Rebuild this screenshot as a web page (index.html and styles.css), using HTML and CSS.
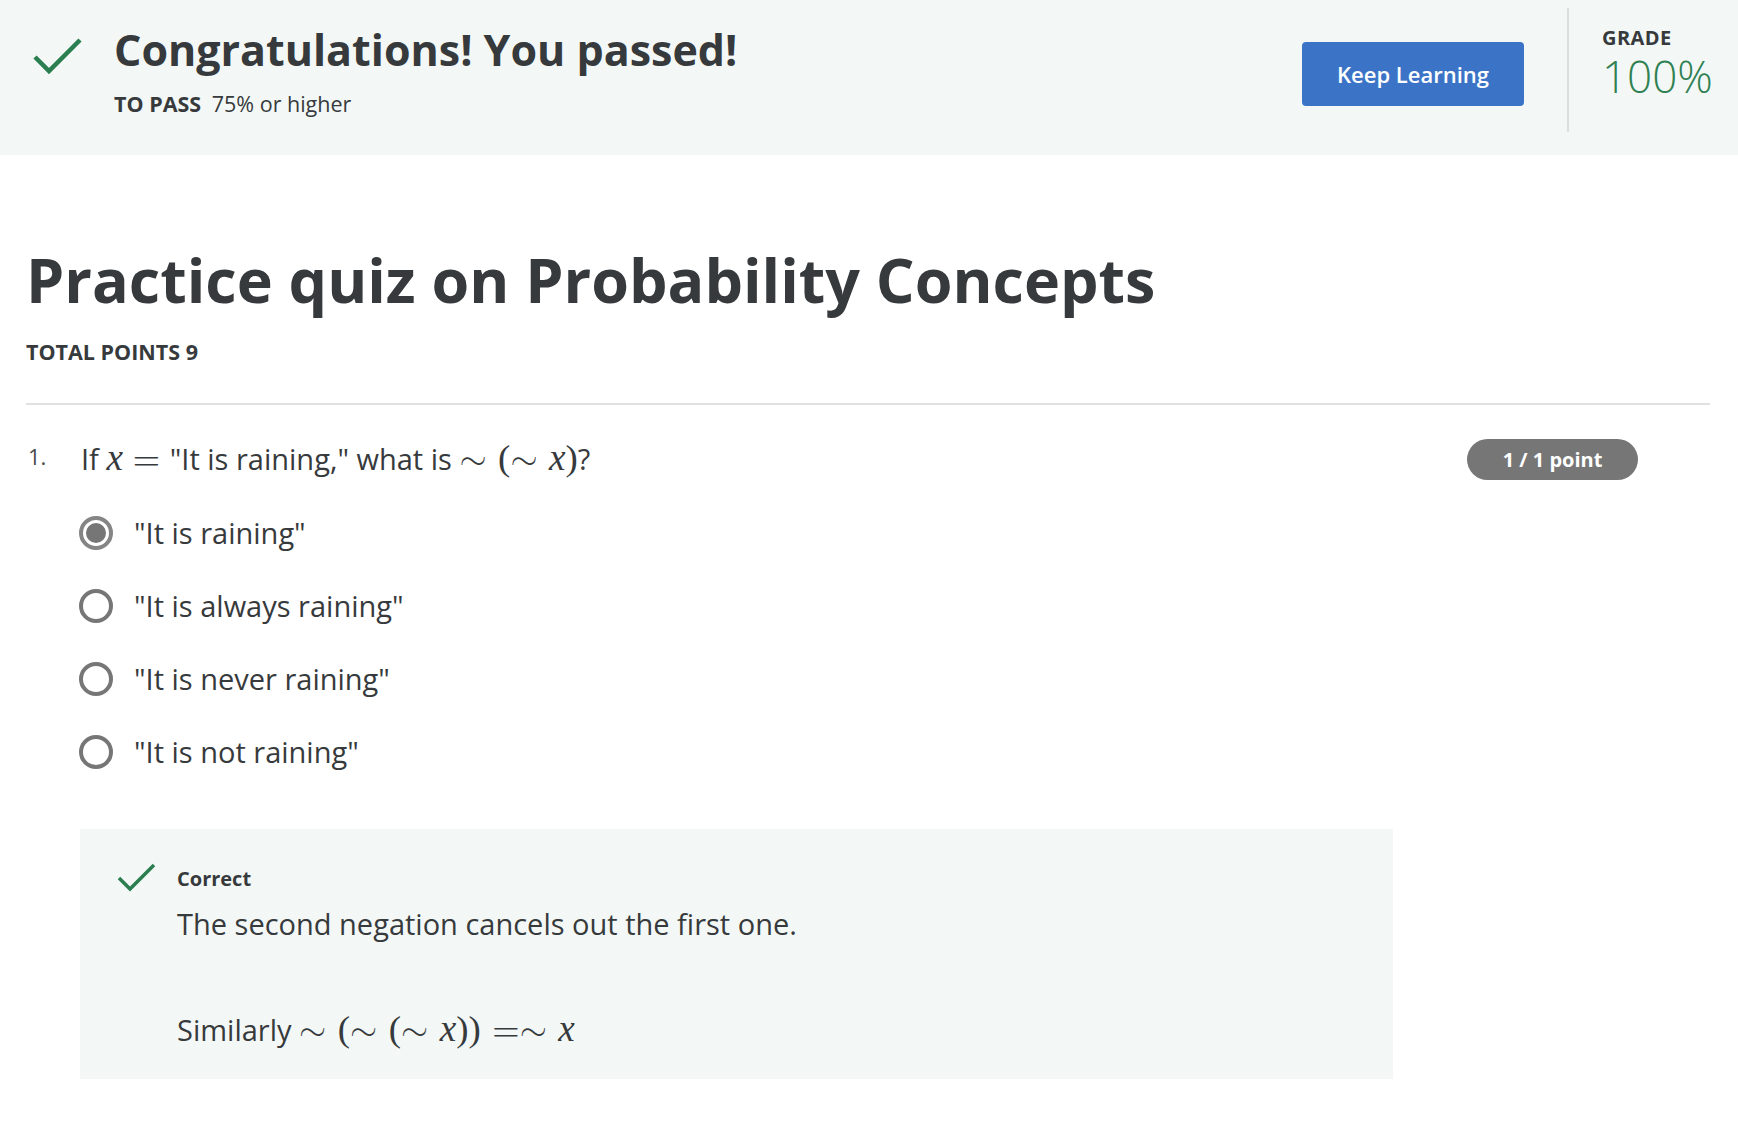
FILE: index.html
```html
<!DOCTYPE html>
<html lang="en">
<head>
<meta charset="utf-8">
<title>Practice quiz on Probability Concepts</title>
<link rel="stylesheet" href="styles.css">
</head>
<body>
<header class="banner">
  <svg class="banner-check" width="50" height="40" viewBox="0 0 50 40" aria-hidden="true">
    <polyline points="2,20 16,34 47,3" fill="none" stroke="#2a7e50" stroke-width="4.5"/>
  </svg>
  <div class="banner-text">
    <h1 class="banner-title">Congratulations! You passed!</h1>
    <div class="banner-sub"><span class="label">TO PASS</span> 75% or higher</div>
  </div>
  <button class="btn-primary" type="button">Keep Learning</button>
  <div class="banner-divider"></div>
  <div class="grade">
    <div class="grade-label">GRADE</div>
    <div class="grade-value">100%</div>
  </div>
</header>

<main class="page">
  <h2 class="quiz-title">Practice quiz on Probability Concepts</h2>
  <div class="total">TOTAL POINTS 9</div>
  <hr class="rule">

  <section class="question">
    <div class="q-head">
      <span class="q-num">1.</span>
      <p class="q-text">If <span class="math"><i class="var">x</i><span class="rel both">=</span></span>"It is raining," what is <span class="math"><span class="rel">∼</span><span class="par">(</span><span class="rel">∼</span><i class="var">x</i><span class="par">)</span></span>?</p>
      <span class="badge">1 / 1 point</span>
    </div>

    <ul class="options">
      <li class="option"><span class="radio checked"></span><span class="opt-text">"It is raining"</span></li>
      <li class="option"><span class="radio"></span><span class="opt-text">"It is always raining"</span></li>
      <li class="option"><span class="radio"></span><span class="opt-text">"It is never raining"</span></li>
      <li class="option"><span class="radio"></span><span class="opt-text">"It is not raining"</span></li>
    </ul>

    <div class="feedback">
      <svg class="fb-check" width="40" height="32" viewBox="0 0 40 32" aria-hidden="true">
        <polyline points="2,16 13,27 37,3" fill="none" stroke="#2a7e50" stroke-width="3.5"/>
      </svg>
      <div class="fb-body">
        <div class="fb-title">Correct</div>
        <p class="fb-p1">The second negation cancels out the first one.</p>
        <p class="fb-p2">Similarly <span class="math"><span class="rel">∼</span><span class="par">(</span><span class="rel">∼</span><span class="par">(</span><span class="rel">∼</span><i class="var">x</i><span class="par">))</span><span class="rel left">=</span><span class="rel">∼</span><i class="var">x</i></span></p>
      </div>
    </div>
  </section>
</main>
</body>
</html>
```
FILE: styles.css
```css
body {
  margin: 0;
  font-family: "Open Sans", "Noto Sans", sans-serif;
  color: #373a3c;
  background: #ffffff;
}

/* Banner */
.banner {
  display: flex;
  align-items: flex-start;
  height: 155px;
  box-sizing: border-box;
  padding-left: 33px;
  background: #f3f8f6;
}
.banner-check {
  flex-shrink: 0;
  margin-top: 37px;
}
.banner-text {
  flex: 1;
  margin-left: 31px;
  padding-top: 28px;
}
.banner-title {
  margin: 0;
  font-size: 43px;
  line-height: 43px;
  font-weight: 700;
}
.banner-sub {
  margin-top: 22px;
  font-size: 21.5px;
  line-height: 21.5px;
}
.label {
  font-weight: 700;
  margin-right: 5px;
}
.btn-primary {
  flex-shrink: 0;
  margin-top: 42px;
  width: 222px;
  height: 64px;
  padding: 0;
  border: 0;
  border-radius: 4px;
  background: #3b74c7;
  color: #ffffff;
  font-family: "Open Sans", sans-serif;
  font-size: 22px;
  font-weight: 600;
}
.banner-divider {
  flex-shrink: 0;
  width: 2px;
  height: 124px;
  margin: 8px 0 0 43px;
  background: #dcdedd;
}
.grade {
  flex-shrink: 0;
  width: 136px;
  margin-left: 33px;
  padding-top: 28px;
}
.grade-label {
  font-size: 20px;
  line-height: 20px;
  font-weight: 700;
  letter-spacing: 0.4px;
}
.grade-value {
  margin-top: 2px;
  font-size: 44px;
  line-height: 1.2;
  font-weight: 300;
  color: #2f8052;
}

/* Page */
.page {
  padding: 0 28px 0 26px;
}
.quiz-title {
  margin: 94px 0 0;
  font-size: 61px;
  line-height: 61px;
  font-weight: 700;
}
.total {
  margin-top: 31px;
  font-size: 21.5px;
  line-height: 21.5px;
  font-weight: 700;
}
.rule {
  margin: 40px 0 0;
  height: 2px;
  border: 0;
  background: #e1e1e1;
}

/* Question */
.q-head {
  display: flex;
  align-items: flex-start;
}
.q-num {
  flex-shrink: 0;
  width: 53px;
  padding-left: 2px;
  margin-top: 40px;
  font-size: 22px;
  line-height: 22px;
  color: #4a4a4a;
}
.q-text {
  flex: 1;
  margin: 37px 0 0;
  font-size: 29px;
  line-height: 1.2;
}

/* Math (KaTeX-like) */
.math {
  font-family: "Latin Modern Math", "DejaVu Serif", "Liberation Serif", serif;
  font-size: 1.21em;
  line-height: 0;
  white-space: nowrap;
}
.var {
  font-family: "Liberation Serif", "DejaVu Serif", serif;
  font-style: italic;
  font-size: 1.06em;
}
.par {
  font-family: "Liberation Serif", "DejaVu Serif", serif;
  font-size: 1.05em;
}
.rel {
  margin-right: 0.33em;
}
.rel.both {
  margin-left: 0.278em;
  margin-right: 0.28em;
}
.rel.left {
  margin-left: 0.33em;
  margin-right: 0;
}

.badge {
  flex-shrink: 0;
  display: flex;
  align-items: center;
  justify-content: center;
  width: 171px;
  height: 41px;
  margin: 34px 72px 0 0;
  border-radius: 21px;
  background: #767676;
  color: #ffffff;
  font-size: 20px;
  font-weight: 700;
}

.options {
  list-style: none;
  margin: 17px 0 0 53px;
  padding: 0;
}
.option {
  display: flex;
  align-items: center;
  height: 73px;
}
.radio {
  flex-shrink: 0;
  box-sizing: border-box;
  width: 34px;
  height: 34px;
  margin-right: 21px;
  border: 4px solid #767676;
  border-radius: 50%;
}
.radio.checked {
  border-color: #858585;
}
.radio.checked::after {
  content: "";
  display: block;
  width: 20px;
  height: 20px;
  margin: 3px;
  border-radius: 50%;
  background: #767676;
}
.opt-text {
  font-size: 29px;
  line-height: 1.2;
}

/* Feedback */
.feedback {
  display: flex;
  align-items: flex-start;
  box-sizing: border-box;
  width: 1313px;
  height: 250px;
  margin: 40px 0 0 54px;
  padding: 33px 0 0 37px;
  background: #f3f8f6;
}
.fb-check {
  flex-shrink: 0;
  margin-right: 20px;
}
.fb-title {
  margin-top: 7px;
  font-size: 20px;
  line-height: 20px;
  font-weight: 700;
}
.fb-p1,
.fb-p2 {
  margin: 0;
  font-size: 29px;
  line-height: 1.2;
}
.fb-p1 {
  margin-top: 18px;
}
.fb-p2 {
  margin-top: 72px;
}
```
